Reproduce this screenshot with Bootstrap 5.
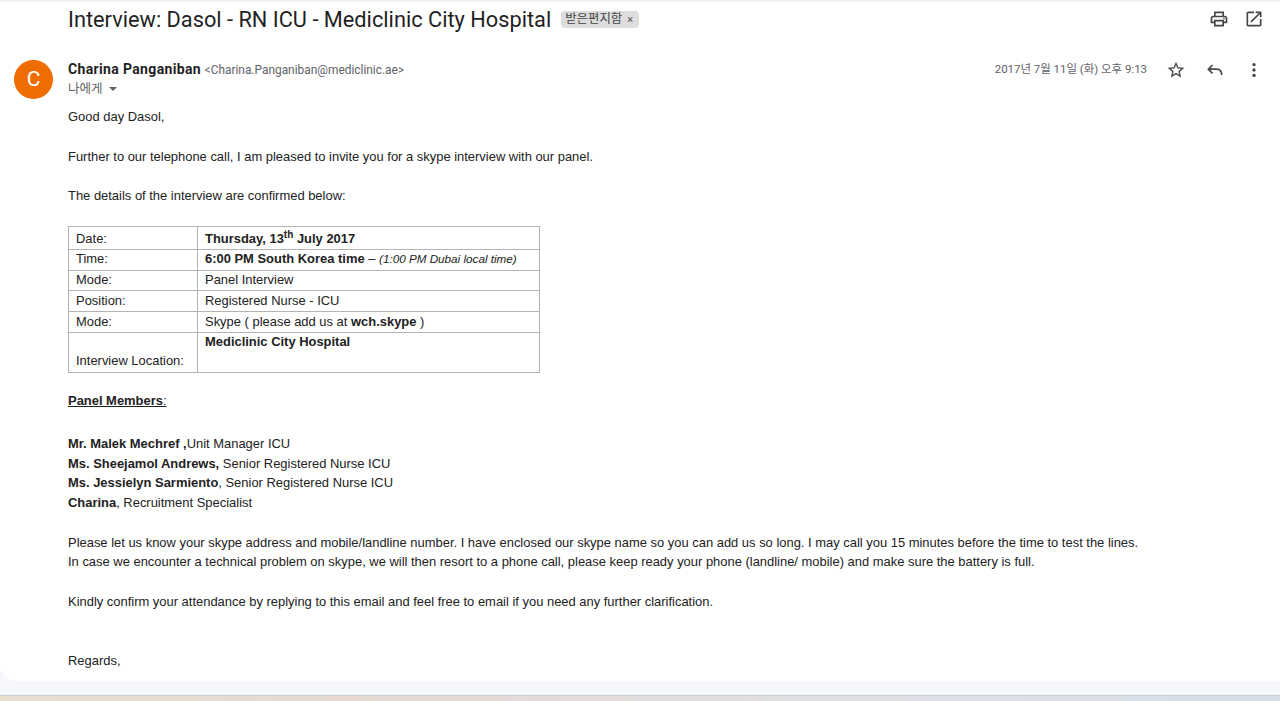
<!DOCTYPE html>
<html lang="ko">
<head>
  <meta charset="UTF-8" />
  <meta name="viewport" content="width=device-width, initial-scale=1.0"/>
  <title>Interview: Dasol - RN ICU - Mediclinic City Hospital</title>
  <link href="https://cdn.jsdelivr.net/npm/bootstrap@5.3.3/dist/css/bootstrap.min.css" rel="stylesheet"/>
  <script src="https://cdn.jsdelivr.net/npm/bootstrap@5.3.3/dist/js/bootstrap.bundle.min.js"></script>
  <style>
    html, body {
      height: 701px;
      overflow: hidden;
    }

    body {
      background-color: #f6f8fc;
      font-family: "Liberation Sans", "Noto Sans CJK KR", sans-serif;
      font-size: 12.95px;
      line-height: 19.75px;
      color: #222;
    }

    .mail-panel {
      height: 681px;
      background: #fff;
      border-top: 2px solid #f0f0f0;
      border-bottom-left-radius: 16px;
      overflow: hidden;
    }

    .subject-row {
      height: 34px;
      padding-left: 68px;
      padding-right: 16px;
    }

    .subject-text {
      font-family: Roboto, "Noto Sans CJK KR", sans-serif;
      font-size: 21.78px;
      line-height: 32px;
      padding-top: 2px;
      font-weight: 400;
      color: #1f1f1f;
      margin: 0 10px 0 0;
    }

    .inbox-chip {
      font-family: Roboto, "Noto Sans CJK KR", sans-serif;
      font-size: 12.4px;
      line-height: 16px;
      background: #ddd;
      color: #444;
      border-radius: 4px;
      padding: 0 4px;
      width: 78px;
      white-space: nowrap;
    }

    .chip-close {
      font-size: 11px;
      margin-left: 5px;
      color: #555;
    }

    .top-icons {
      gap: 15px;
      color: #444746;
    }

    .sender-row {
      padding: 24px 16px 0 14px;
      height: 71px;
    }

    .avatar-circle {
      width: 39px;
      height: 39px;
      background: #ef6c00;
      color: #fff;
      font-family: Roboto, sans-serif;
      font-size: 21px;
      margin-right: 15px;
    }

    .sender-name {
      font-family: Roboto, sans-serif;
      font-size: 14px;
      letter-spacing: .35px;
      font-weight: 700;
      color: #1f1f1f;
    }

    .sender-mail {
      font-family: Roboto, sans-serif;
      font-size: 11.9px;
      color: #5f6368;
    }

    .to-me {
      font-family: Roboto, "Noto Sans CJK KR", sans-serif;
      font-size: 12.5px;
      line-height: 17px;
      margin-top: -1px;
      color: #5f6368;
    }

    .to-caret {
      display: inline-block;
      width: 0;
      height: 0;
      margin-left: 6px;
      border-left: 4.5px solid transparent;
      border-right: 4.5px solid transparent;
      border-top: 4.5px solid #5f6368;
      vertical-align: middle;
    }

    .sent-date {
      font-family: Roboto, "Noto Sans CJK KR", sans-serif;
      font-size: 11.45px;
      color: #5f6368;
      margin-right: 19px;
    }

    .mail-actions {
      gap: 19px;
      color: #444746;
    }

    .mail-body {
      padding-left: 68px;
    }

    .mail-line {
      margin: 0;
      min-height: 19.75px;
      white-space: nowrap;
    }

    .details-table {
      width: 472px;
      margin: 20.25px 0 18px;
      table-layout: fixed;
      color: #222;
      font-size: 12.95px;
      line-height: 15px;
    }

    .details-table > tbody > tr > td {
      border: 1px solid #b4b4b4;
      padding: 1px 7px 3px;
      vertical-align: bottom;
    }

    .details-table .first-col {
      width: 129px;
    }

    .details-table > tbody > .row-date > td {
      height: 23px;
      padding-bottom: 3px;
    }

    .details-table .row-plain td {
      height: 21px;
    }

    .details-table > tbody > .row-time > td {
      height: 21px;
      padding-bottom: 4px;
    }

    .details-table .row-short td {
      height: 20px;
    }

    .details-table > tbody > .row-place > td {
      height: 40px;
      padding-bottom: 4px;
    }

    .details-table > tbody > .row-place > .place-name {
      vertical-align: top;
      padding-top: 1px;
    }

    .details-table sup {
      font-size: 10px;
    }

    .local-time {
      font-size: 11.7px;
    }

    .panel-title {
      margin-bottom: 23px;
      font-weight: 700;
    }

    .colon-plain {
      font-weight: 400;
    }

    .desk-strip {
      height: 14px;
    }

    .wall-strip {
      height: 6px;
      border-top: 1px solid #c9cdd2;
      background: linear-gradient(90deg, #e8dfcf, #e6d8d2 30%, #dfe0e6 70%, #d5dde8);
    }
  </style>
</head>
<body>
  <div class="mail-panel">
    <div class="subject-row d-flex align-items-center">
      <h1 class="subject-text">Interview: Dasol - RN ICU - Mediclinic City Hospital</h1>
      <span class="inbox-chip">받은편지함<span class="chip-close">×</span></span>
      <div class="top-icons d-flex ms-auto">
        <svg width="20" height="20" viewBox="0 0 24 24" fill="currentColor"><path d="M19 8h-1V3H6v5H5c-1.66 0-3 1.34-3 3v6h4v4h12v-4h4v-6c0-1.66-1.34-3-3-3zM8 5h8v3H8V5zm8 14H8v-4h8v4zm4-4h-2v-2H6v2H4v-4c0-.55.45-1 1-1h14c.55 0 1 .45 1 1v4z"/><circle cx="18" cy="11.5" r="1"/></svg>
        <svg width="20" height="20" viewBox="0 0 24 24" fill="currentColor"><path d="M19 19H5V5h7V3H5c-1.11 0-2 .9-2 2v14c0 1.1.89 2 2 2h14c1.1 0 2-.9 2-2v-7h-2v7zM14 3v2h3.59l-9.83 9.83 1.41 1.41L19 6.41V10h2V3h-7z"/></svg>
      </div>
    </div>

    <div class="sender-row d-flex align-items-start">
      <div class="avatar-circle rounded-circle d-flex align-items-center justify-content-center flex-shrink-0">C</div>
      <div>
        <div><span class="sender-name">Charina Panganiban</span> <span class="sender-mail">&lt;Charina.Panganiban@mediclinic.ae&gt;</span></div>
        <div class="to-me">나에게<span class="to-caret"></span></div>
      </div>
      <div class="d-flex align-items-center ms-auto">
        <span class="sent-date">2017년 7월 11일 (화) 오후 9:13</span>
        <div class="mail-actions d-flex">
          <svg width="20" height="20" viewBox="0 0 24 24" fill="currentColor"><path d="M22 9.24l-7.19-.62L12 2 9.19 8.63 2 9.24l5.46 4.73L5.82 21 12 17.27 18.18 21l-1.63-7.03L22 9.24zM12 15.4l-3.76 2.27 1-4.28-3.32-2.88 4.38-.38L12 6.1l1.71 4.04 4.38.38-3.32 2.88 1 4.28L12 15.4z"/></svg>
          <svg width="20" height="20" viewBox="0 0 24 24" fill="none" stroke="currentColor" stroke-width="2"><path d="M9 6l-5 5 5 5M4 11h10c4 0 6 3 6 7"/></svg>
          <svg width="20" height="20" viewBox="0 0 24 24" fill="currentColor"><circle cx="12" cy="5.5" r="2"/><circle cx="12" cy="12" r="2"/><circle cx="12" cy="18.5" r="2"/></svg>
        </div>
      </div>
    </div>

    <div class="mail-body">
      <p class="mail-line">Good day Dasol,</p>
      <p class="mail-line">&nbsp;</p>
      <p class="mail-line">Further to our telephone call, I am pleased to invite you for a skype interview with our panel.</p>
      <p class="mail-line">&nbsp;</p>
      <p class="mail-line">The details of the interview are confirmed below:</p>

      <table class="table table-bordered details-table">
        <colgroup><col class="first-col"><col></colgroup>
        <tbody>
          <tr class="row-date"><td>Date:</td><td><b>Thursday, 13<sup>th</sup> July 2017</b></td></tr>
          <tr class="row-time"><td>Time:</td><td><b>6:00 PM South Korea time</b> – <i class="local-time">(1:00 PM Dubai local time)</i></td></tr>
          <tr class="row-short"><td>Mode:</td><td>Panel Interview</td></tr>
          <tr class="row-plain"><td>Position:</td><td>Registered Nurse - ICU</td></tr>
          <tr class="row-plain"><td>Mode:</td><td>Skype ( please add us at <b>wch.skype</b> )</td></tr>
          <tr class="row-place"><td>Interview Location:</td><td class="place-name"><b>Mediclinic City Hospital</b></td></tr>
        </tbody>
      </table>

      <p class="mail-line panel-title"><u>Panel Members</u><u class="colon-plain">:</u></p>
      <p class="mail-line"><b>Mr. Malek Mechref ,</b>Unit Manager ICU</p>
      <p class="mail-line"><b>Ms. Sheejamol Andrews,</b> Senior Registered Nurse ICU</p>
      <p class="mail-line"><b>Ms. Jessielyn Sarmiento</b>, Senior Registered Nurse ICU</p>
      <p class="mail-line"><b>Charina</b>, Recruitment Specialist</p>
      <p class="mail-line">&nbsp;</p>
      <p class="mail-line">Please let us know your skype address and mobile/landline number. I have enclosed our skype name so you can add us so long. I may call you 15 minutes before the time to test the lines.</p>
      <p class="mail-line">In case we encounter a technical problem on skype, we will then resort to a phone call, please keep ready your phone (landline/ mobile) and make sure the battery is full.</p>
      <p class="mail-line">&nbsp;</p>
      <p class="mail-line">Kindly confirm your attendance by replying to this email and feel free to email if you need any further clarification.</p>
      <p class="mail-line">&nbsp;</p>
      <p class="mail-line">&nbsp;</p>
      <p class="mail-line">Regards,</p>
    </div>
  </div>
  <div class="desk-strip"></div>
  <div class="wall-strip"></div>
</body>
</html>
